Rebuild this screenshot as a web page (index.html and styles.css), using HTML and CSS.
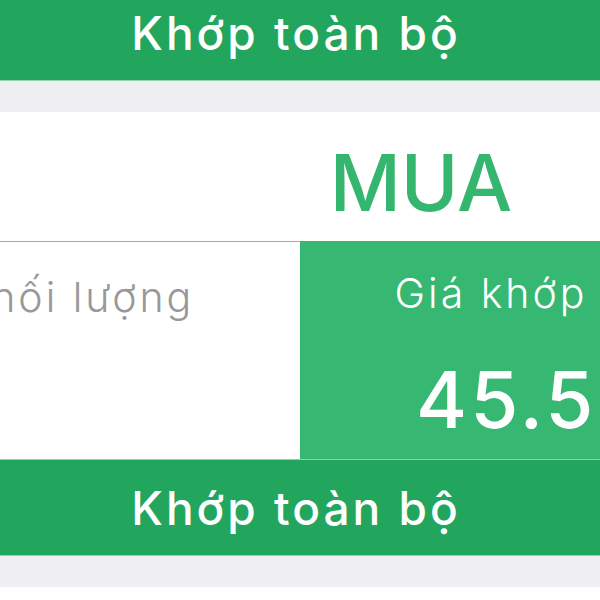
FILE: index.html
```html
<!DOCTYPE html>
<html>

<head>
    <title>Khớp lệnh</title>
    <link rel="stylesheet" href="styles.css">
</head>

<body>

    <div class="screen">
        <div class="band band-top">Khớp toàn bộ</div>
        <div class="gap"></div>

        <div class="side">MUA</div>

        <div class="cols">
            <div class="col col-volume">
                <div class="label">Khối lượng</div>
            </div>
            <div class="col col-price">
                <div class="label">Giá khớp</div>
                <div class="value">45.55</div>
            </div>
        </div>

        <div class="band">Khớp toàn bộ</div>
        <div class="gap"></div>
    </div>

</body>

</html>
```

FILE: styles.css
```css
body {
    margin: 0;
    background-color: #fff;
    font-family: Inter, "Noto Sans", sans-serif;
    overflow: hidden;
}

.screen {
    width: 600px;
    overflow: hidden;
}

.band {
    display: flex;
    align-items: center;
    justify-content: center;
    height: 95px;
    padding-right: 8px;
    background-color: #22a65e;
    border-top: 1px solid #8fd3ab;
    border-bottom: 1px solid #8fd3ab;
    color: #fff;
    font-size: 46px;
    font-weight: 500;
    letter-spacing: 3px;
}

.band-top {
    margin-top: -15px;
    border-top: none;
}

.gap {
    height: 31px;
    background-color: #efeff4;
}

.side {
    display: flex;
    align-items: center;
    justify-content: center;
    height: 129px;
    padding-left: 242px;
    padding-top: 12px;
    box-sizing: border-box;
    color: #35b66f;
    font-size: 78px;
    font-weight: 500;
}

/* two columns, wider than the window */
.cols {
    display: flex;
    height: 218px;
    margin-left: -144px;
    width: 826px;
}

.col {
    box-sizing: border-box;
}

.col-volume {
    width: 444px;
    border-top: 1px solid #a9a9a9;
    padding-top: 32px;
    text-align: center;
}

.col-price {
    width: 382px;
    padding-top: 29px;
    background-color: #37b872;
    color: #fff;
    text-align: center;
}

.label {
    font-size: 41px;
    line-height: 46px;
    font-weight: 300;
    letter-spacing: 3px;
    white-space: nowrap;
}

.col-volume .label {
    color: #989898;
}

.value {
    margin-top: 46px;
    padding-left: 116px;
    text-align: left;
    font-size: 78px;
    line-height: 76px;
    font-weight: 500;
    letter-spacing: 3px;
    white-space: nowrap;
}
```
